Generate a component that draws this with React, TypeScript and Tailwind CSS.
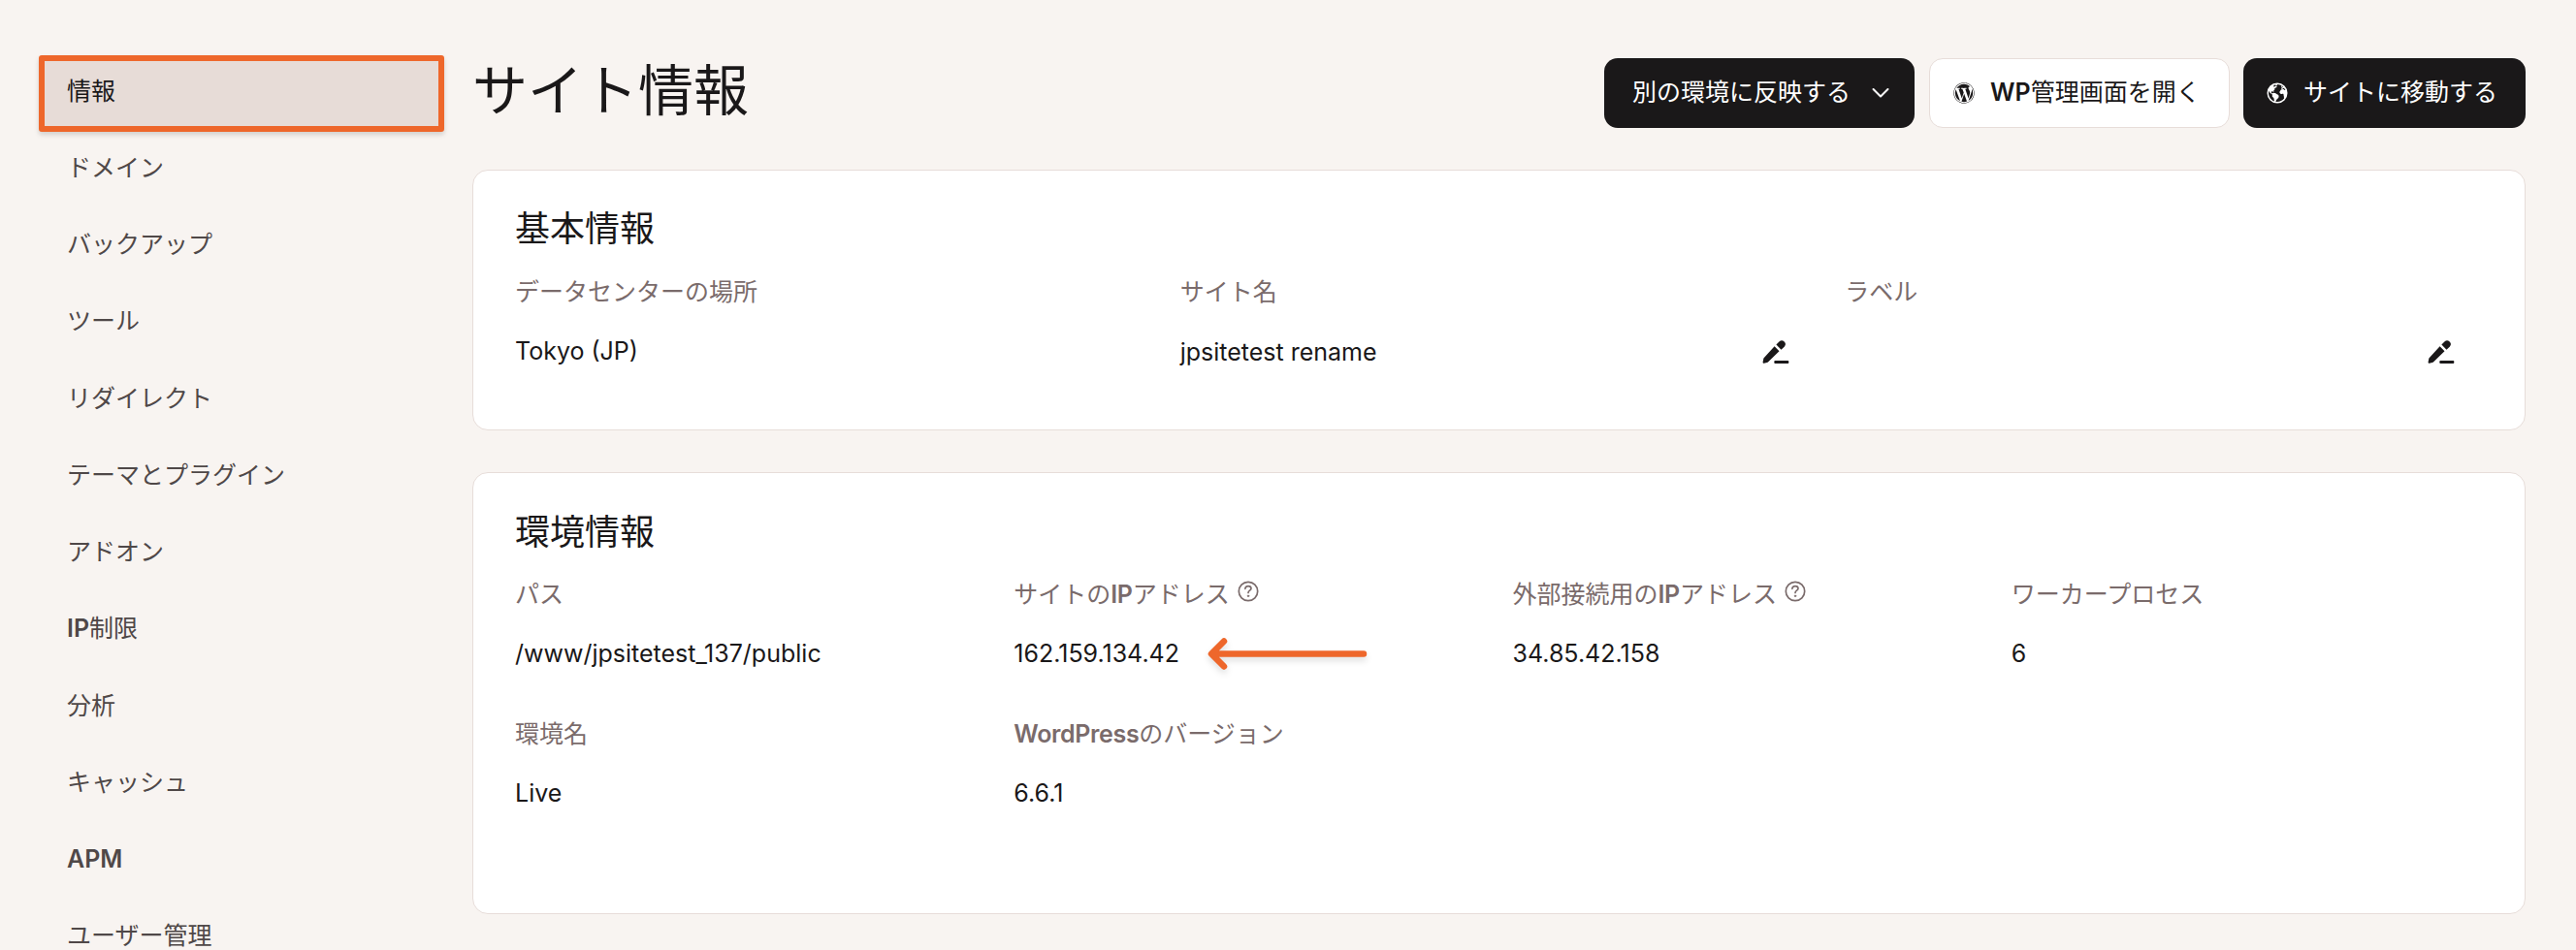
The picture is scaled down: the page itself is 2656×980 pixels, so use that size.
import type { ReactNode } from "react";
import { FaWordpress } from "react-icons/fa";
import { IoEarth } from "react-icons/io5";

const NAV = ["情報", "ドメイン", "バックアップ", "ツール", "リダイレクト", "テーマとプラグイン", "アドオン", "IP制限", "分析", "キャッシュ", "APM", "ユーザー管理"];

const Label = ({ text }: { text: string }) => (
  <span>
    {text.split(/([A-Za-z]+)/).map((part, i) => (i % 2 ? <span key={i} className="font-semibold">{part}</span> : part))}
  </span>
);

const HelpIcon = () => (
  <svg className="ml-[8px] mt-[-9px] h-[22px] w-[22px]" viewBox="0 0 22 22" fill="none" stroke="currentColor" strokeWidth="1.7" strokeLinecap="round">
    <circle cx="11" cy="11" r="9.7" />
    <path d="M7.900 8.300c.1-1.700 1.400-2.700 3.100-2.700s3 1 3 2.500c0 2.100-3 2-3 4.300" />
    <circle cx="11" cy="15.800" r="0.800" fill="currentColor" strokeWidth="0.800" />
  </svg>
);

const EditIcon = () => (
  <svg className="h-6 w-7" viewBox="0 0 28 24" fill="#1a1819">
    <path d="M12.600 6.300 17.500 11.200 6.200 22.300c-.4.400-.8.600-1.300.700l-3.100.800c-.8.200-1.400-.5-1.200-1.200l.7-3.500c.1-.6.400-1 .8-1.400z" />
    <path d="m14.400 4.500 3-3a3.800 3.800 0 0 1 5.300 0 3.800 3.800 0 0 1 0 5.200l-3.200 3z" />
    <rect x="12.300" y="21" width="15" height="3" rx="1" />
  </svg>
);

const Card = ({ title, className, children }: { title: string; className: string; children: ReactNode }) => (
  <section className={`rounded-[16px] border border-[#e7ddd9] bg-white px-[43px] ${className}`}>
    <h2 className="text-[36px] leading-[44px] text-[#1a1819]">{title}</h2>
    {children}
  </section>
);

const Field = ({ label, help, edit, children }: { label: string; help?: boolean; edit?: boolean; children?: ReactNode }) => (
  <div>
    <div className="flex h-10 items-center whitespace-nowrap text-[25px] text-[#7a6b6b] [&_.font-semibold]:tracking-[-0.35px]">
      <Label text={label} />
      {help && <HelpIcon />}
    </div>
    <div className="mt-[21px] flex h-10 items-center text-[25px] text-[#1a1819]">
      <span className={edit ? "mt-[2px] whitespace-nowrap" : "whitespace-nowrap"}>{children}</span>
      {edit && <span className="ml-auto mr-[29px]"><EditIcon /></span>}
    </div>
  </div>
);

export default function App() {
  return (
    <div className="flex h-[980px] w-[2656px] overflow-hidden bg-[#f8f4f1] font-['Inter','Noto_Sans_CJK_JP',sans-serif] text-[#1a1819]">
      <nav className="w-[487px] shrink-0 pl-10 pt-[57px]">
        {NAV.map((item, i) =>
          i === 0 ? (
            <div key={item} className="mb-[-2px] flex h-[79px] w-[418px] items-center rounded-[3px] border-[6px] border-[#ee672b] bg-[#e7dcd7] pb-[3px] pl-[23px] text-[25px] shadow-[0_3px_5px_rgba(0,0,0,0.15)]">
              {item}
            </div>
          ) : (
            <div key={item} className="flex h-[79.250px] items-center pl-[29px] text-[25px] text-[#4f4848]"><Label text={item} /></div>
          ),
        )}
      </nav>
      <main className="w-[2117px] shrink-0">
        <header className="flex h-[175px] items-start pt-[60px]">
          <h1 className="mt-[-4px] text-[57px] leading-[76px]">サイト情報</h1>
          <div className="ml-auto flex gap-[14px] text-[25px]">
            <button className="mr-px flex h-[72px] w-[320px] items-center rounded-[14px] bg-[#1a1819] pl-[29px] text-white">
              別の環境に反映する
              <svg className="ml-[22px] h-[18px] w-[18px]" viewBox="0 0 18 18" fill="none" stroke="currentColor" strokeWidth="2" strokeLinecap="round" strokeLinejoin="round"><path d="m1.500 5 7.500 7.500L16.500 5" /></svg>
            </button>
            <button className="flex h-[72px] w-[310px] items-center rounded-[14px] border border-[#e7ddd9] bg-white pl-[24px]">
              <FaWordpress className="h-[22px] w-[22px]" />
              <span className="ml-4"><Label text="WP管理画面を開く" /></span>
            </button>
            <button className="flex h-[72px] w-[291px] items-center rounded-[14px] bg-[#1a1819] pl-[23px] text-white">
              <IoEarth className="h-6 w-6" />
              <span className="ml-[15px]">サイトに移動する</span>
            </button>
          </div>
        </header>
        <Card title="基本情報" className="h-[269px] pt-[38px]">
          <div className="mt-[24px] grid grid-cols-3 gap-x-[28px]">
            <Field label="データセンターの場所">Tokyo (JP)</Field>
            <Field label="サイト名" edit>jpsitetest rename</Field>
            <Field label="ラベル" edit />
          </div>
        </Card>
        <Card title="環境情報" className="mt-[43px] h-[456px] pt-[39px]">
          <div className="mt-[23px] grid grid-cols-4 gap-x-[28px] gap-y-[42.500px]">
            <Field label="パス">/www/jpsitetest_137/public</Field>
            <Field label="サイトのIPアドレス" help>
              <span className="flex items-center">
                162.159.134.42
                <svg className="ml-[27px] h-[40px] w-[172px] overflow-visible drop-shadow-[0_4px_3px_rgba(0,0,0,0.12)]" viewBox="0 0 172 40" fill="none" stroke="#ee672b" strokeWidth="6.500" strokeLinecap="round" strokeLinejoin="round">
                  <path d="M163 19.500H8M19 6.500 6 19.500l13 13" />
                </svg>
              </span>
            </Field>
            <Field label="外部接続用のIPアドレス" help>34.85.42.158</Field>
            <Field label="ワーカープロセス">6</Field>
            <Field label="環境名">Live</Field>
            <Field label="WordPressのバージョン">6.6.1</Field>
          </div>
        </Card>
      </main>
    </div>
  );
}
